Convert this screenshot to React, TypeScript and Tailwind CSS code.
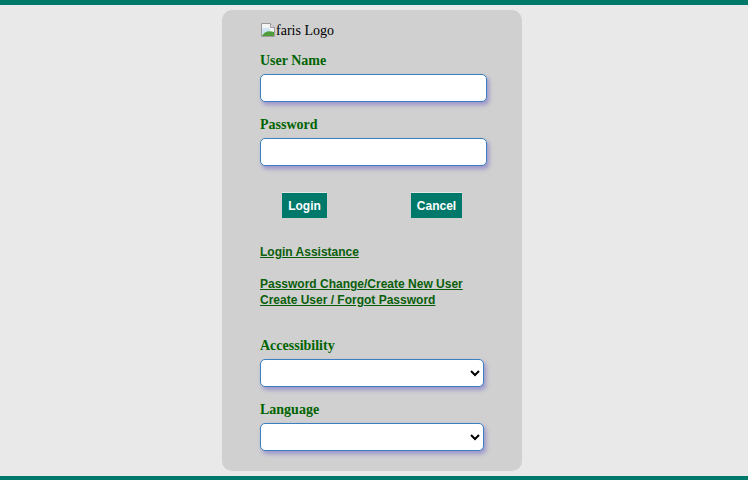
export default function App() {
  const label = "block text-[14px] leading-[18px] pt-[1px] font-bold text-[#006400] [font-family:'Liberation_Serif',serif]"
  const field =
    'block h-[28px] rounded-[5px] border border-[#3a7fc0] bg-white shadow-[2px_3px_4px_rgba(110,100,200,0.55)] outline-none'
  const link =
    "block text-[12px] leading-[16px] font-bold text-[#0b5e0b] underline [font-family:'Liberation_Sans',sans-serif]"
  const btn =
    "h-[26px] bg-[#00796b] border-t border-[#e6e6e6] text-white text-[12px] font-bold [font-family:'Liberation_Sans',sans-serif]"

  return (
    <div className="min-h-[480px] bg-[#e9e9e9] flex flex-col">
      <div className="h-[5px] bg-[#00796b]" />
      <div className="mt-[5px] ml-[222px] w-[300px] h-[461px] rounded-[10px] bg-[#d0d0d0] pl-[38px] pt-[11px]">
        <div className="flex items-center h-[18px] text-[14px] text-black [font-family:'Liberation_Serif',serif]">
          <svg width="16" height="16" viewBox="0 0 16 16">
            <path d="M1.5 1.5h9l4 4v9h-13z" fill="#f4f4f4" stroke="#9a9a9a" />
            <path d="M10.5 1.5v4h4" fill="#dcdcdc" stroke="#9a9a9a" />
            <path d="M2 7c2-1 4-2 8 0v7H2z" fill="#cfe4f5" />
            <path d="M2 14c2-4 6-6 12-4v4z" fill="#4f9c3a" />
          </svg>
          faris Logo
        </div>

        <label className={`${label} mt-[12px]`}>User Name</label>
        <input type="text" className={`${field} w-[227px] mt-[4px]`} />

        <label className={`${label} mt-[13px]`}>Password</label>
        <input type="password" className={`${field} w-[227px] mt-[4px]`} />

        <div className="flex mt-[26px]">
          <button className={`${btn} w-[45px] ml-[22px]`}>Login</button>
          <button className={`${btn} w-[51px] ml-[84px]`}>Cancel</button>
        </div>

        <a href="#" className={`${link} mt-[26px] w-fit`}>
          Login Assistance
        </a>
        <a href="#" className={`${link} mt-[16px] w-fit`}>
          Password Change/Create New User
        </a>
        <a href="#" className={`${link} w-fit`}>
          Create User / Forgot Password
        </a>

        <label className={`${label} mt-[28px]`}>Accessibility</label>
        <select className={`${field} w-[224px] mt-[4px]`}>
          <option></option>
        </select>

        <label className={`${label} mt-[13px]`}>Language</label>
        <select className={`${field} w-[224px] mt-[4px]`}>
          <option></option>
        </select>
      </div>
      <div className="mt-[5px] h-[4px] bg-[#00796b]" />
    </div>
  )
}
